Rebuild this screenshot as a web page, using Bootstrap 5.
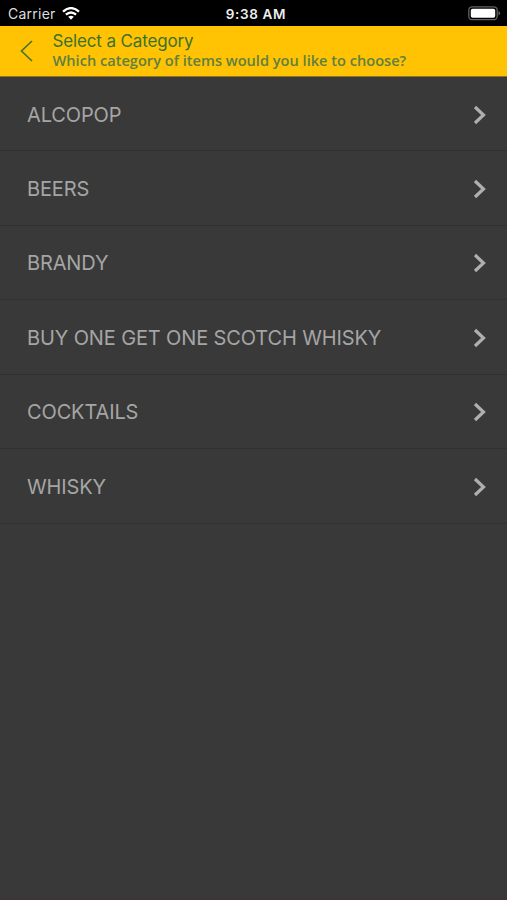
<!DOCTYPE html>
<html lang="en">
<head>
<meta charset="utf-8">
<meta name="viewport" content="width=device-width, initial-scale=1">
<title>Select a Category</title>
<link href="https://cdn.jsdelivr.net/npm/bootstrap@5.3.0/dist/css/bootstrap.min.css" rel="stylesheet">
<style>
body{background:#393939;font-family:Inter,"Liberation Sans",sans-serif;height:900px;overflow:hidden;border-bottom:3px solid #3b3538}
.status-bar{height:25.5px;background:#000;color:#dedede;font-size:14px;display:grid;grid-template-columns:1fr auto 1fr;padding:2px 6px 0 8px}
.carrier{letter-spacing:.25px}
.carrier-group{gap:6px}
.clock{font-size:13.5px;font-weight:600;letter-spacing:.65px;color:#eee;padding-left:3px}
.title-bar{height:51.5px;background:#ffc303;border-bottom:1px solid #8d7222;padding-left:20px}
.title-bar svg{margin-right:19.5px}
.title-bar h1{font-size:17px;line-height:20px;font-weight:400;color:#3a722f;margin:0;letter-spacing:-.14px}
.title-bar p{font-family:"Open Sans",sans-serif;font-size:14.6px;line-height:19px;font-weight:600;color:#607f42;margin:0 0 1px}
.list-group .category,.list-group .category:last-child{height:74.45px;background:transparent;color:#a5a5a5;border:0;border-bottom:1px solid #303030;border-radius:0;padding:1.6px 20px 0 27px;font-size:20px;line-height:24px;letter-spacing:-.13px}
</style>
<script src="https://cdn.jsdelivr.net/npm/bootstrap@5.3.0/dist/js/bootstrap.bundle.min.js"></script>
</head>
<body>
<div class="status-bar align-items-center">
  <div class="carrier-group d-flex align-items-center"><span class="carrier">Carrier</span>
    <svg width="18" height="13" viewBox="0 0 18 13" fill="none" stroke="#fff" stroke-width="2.3"><path d="M1 4.6Q9-2.4 17 4.6M3.9 7.7Q9 3.3 14.1 7.7"/><path d="M6.2 9.8Q9 7.6 11.8 9.8L9 12.7Z" fill="#fff" stroke="none"/></svg>
  </div>
  <span class="clock">9:38 AM</span>
  <svg class="ms-auto" width="33" height="15" viewBox="0 0 33 15"><rect x=".8" y=".8" width="28.4" height="12.9" rx="3.5" fill="#000" stroke="#626262" stroke-width="1.3"/><rect x="2.8" y="2.7" width="24.4" height="9.1" rx="1.8" fill="#fff"/><path d="M30.5 5v4.6q1.6-.8 1.6-2.3T30.500 5Z" fill="#666"/></svg>
</div>
<header class="title-bar d-flex align-items-center">
  <svg width="13" height="22" viewBox="0 0 13 22" fill="none" stroke="#4d742b" stroke-width="1.7"><path d="M12 1 1.500 11 12 21"/></svg>
  <div><h1>Select a Category</h1><p>Which category of items would you like to choose?</p></div>
</header>
<main class="list-group list-group-flush">
  <a class="list-group-item category d-flex align-items-center justify-content-between"><span>ALCOPOP</span><svg width="15" height="20" viewBox="0 0 15 20" fill="none" stroke="#afafaf" stroke-width="3.2"><path d="m3 2 8.500 8L3 18"/></svg></a>
  <a class="list-group-item category d-flex align-items-center justify-content-between"><span>BEERS</span><svg width="15" height="20" viewBox="0 0 15 20" fill="none" stroke="#afafaf" stroke-width="3.2"><path d="m3 2 8.500 8L3 18"/></svg></a>
  <a class="list-group-item category d-flex align-items-center justify-content-between"><span>BRANDY</span><svg width="15" height="20" viewBox="0 0 15 20" fill="none" stroke="#afafaf" stroke-width="3.2"><path d="m3 2 8.500 8L3 18"/></svg></a>
  <a class="list-group-item category d-flex align-items-center justify-content-between"><span>BUY ONE GET ONE SCOTCH WHISKY</span><svg width="15" height="20" viewBox="0 0 15 20" fill="none" stroke="#afafaf" stroke-width="3.2"><path d="m3 2 8.500 8L3 18"/></svg></a>
  <a class="list-group-item category d-flex align-items-center justify-content-between"><span>COCKTAILS</span><svg width="15" height="20" viewBox="0 0 15 20" fill="none" stroke="#afafaf" stroke-width="3.2"><path d="m3 2 8.500 8L3 18"/></svg></a>
  <a class="list-group-item category d-flex align-items-center justify-content-between"><span>WHISKY</span><svg width="15" height="20" viewBox="0 0 15 20" fill="none" stroke="#afafaf" stroke-width="3.2"><path d="m3 2 8.500 8L3 18"/></svg></a>
</main>
</body>
</html>
